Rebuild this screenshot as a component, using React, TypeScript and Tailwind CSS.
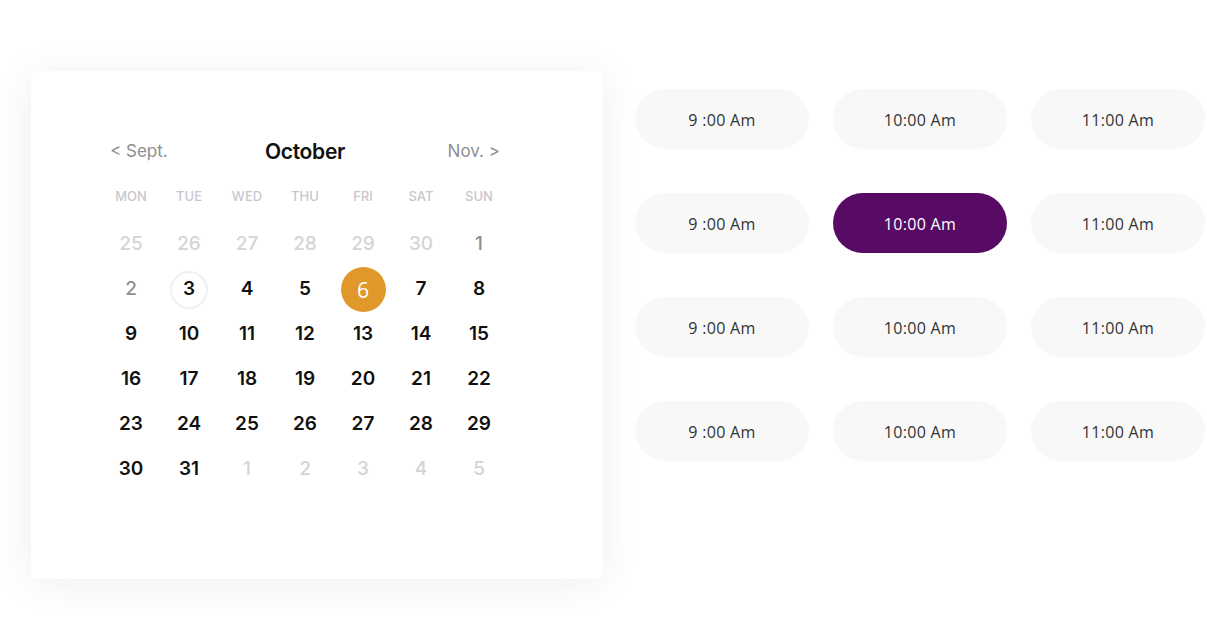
import React from "react";

type Day = { n: number; tone: "muted" | "past" | "normal" | "today" | "selected" };

const weeks: Day[][] = [
  [25, 26, 27, 28, 29, 30].map((n) => ({ n, tone: "muted" as const })).concat([{ n: 1, tone: "past" }]),
  [
    { n: 2, tone: "past" },
    { n: 3, tone: "today" },
    { n: 4, tone: "normal" },
    { n: 5, tone: "normal" },
    { n: 6, tone: "selected" },
    { n: 7, tone: "normal" },
    { n: 8, tone: "normal" },
  ],
  [9, 10, 11, 12, 13, 14, 15].map((n) => ({ n, tone: "normal" as const })),
  [16, 17, 18, 19, 20, 21, 22].map((n) => ({ n, tone: "normal" as const })),
  [23, 24, 25, 26, 27, 28, 29].map((n) => ({ n, tone: "normal" as const })),
  [
    { n: 30, tone: "normal" },
    { n: 31, tone: "normal" },
    ...[1, 2, 3, 4, 5].map((n) => ({ n, tone: "muted" as const })),
  ],
];

const days = ["MON", "TUE", "WED", "THU", "FRI", "SAT", "SUN"];

function DayCell({ d }: { d: Day }) {
  if (d.tone === "selected") {
    return (
      <div className="flex h-[45px] w-[58px] items-center justify-center">
        <div className="flex h-[45px] w-[45px] items-center justify-center rounded-full bg-[#e1982b] pt-[2px] text-[21px] text-white [font-family:'Open_Sans','Noto_Sans',sans-serif]">
          {d.n}
        </div>
      </div>
    );
  }
  if (d.tone === "today") {
    return (
      <div className="flex h-[45px] w-[58px] items-center justify-center">
        <div className="flex h-[38px] w-[38px] items-center justify-center rounded-full border-2 border-[#efeff4] text-[19px] font-semibold text-[#111]">
          {d.n}
        </div>
      </div>
    );
  }
  const color =
    d.tone === "muted" ? "text-[#d4d4d8]" : d.tone === "past" ? "text-[#8e8e93]" : "text-[#111]";
  const weight = d.tone === "normal" ? "font-semibold" : "font-medium";
  return (
    <div className={`flex h-[45px] w-[58px] items-center justify-center text-[19px] ${weight} ${color}`}>
      {d.n}
    </div>
  );
}

function Slot({ label, active }: { label: string; active?: boolean }) {
  return (
    <div
      className={`flex h-[60px] w-[174px] items-center justify-center rounded-full pt-[2px] text-[16px] tracking-[0.3px] [font-family:'Open_Sans','Noto_Sans',sans-serif] ${
        active ? "bg-[#580b65] text-white" : "bg-[#f8f8f8] text-[#333]"
      }`}
    >
      {label}
    </div>
  );
}

export default function App() {
  const rows = [0, 1, 2, 3];
  return (
    <div className="flex h-[629px] w-[1207px] overflow-hidden bg-white pl-[31px] pt-[71px] [font-family:'Inter','Liberation_Sans',sans-serif]">
      <div className="h-[508px] w-[572px] shrink-0 rounded-[5px] bg-white pl-[71px] pt-[58px] shadow-[0_4px_40px_rgba(0,0,0,0.07)]">
        <div className="w-[406px]">
          <div className="grid h-[45px] grid-cols-3 items-center px-[8px]">
            <div className="text-left text-[17px] text-[#8e8e93]">&lt; Sept.</div>
            <div className="text-center text-[21px] font-semibold tracking-[-0.3px] text-[#111]">October</div>
            <div className="text-right text-[17px] text-[#8e8e93]">Nov. &gt;</div>
          </div>
          <div className="flex h-[45px] items-center">
            {days.map((d) => (
              <div key={d} className="w-[58px] text-center text-[13px] font-medium text-[#c7c7cc]">
                {d}
              </div>
            ))}
          </div>
          <div className="mt-[3px]">
            {weeks.map((w, i) => (
              <div key={i} className="flex">
                {w.map((d, j) => (
                  <DayCell key={j} d={d} />
                ))}
              </div>
            ))}
          </div>
        </div>
      </div>
      <div className="ml-[32px] mt-[18px] flex flex-col gap-[44px]">
        {rows.map((r) => (
          <div key={r} className="flex gap-[24px]">
            <Slot label="9 :00 Am" />
            <Slot label="10:00 Am" active={r === 1} />
            <Slot label="11:00 Am" />
          </div>
        ))}
      </div>
    </div>
  );
}
